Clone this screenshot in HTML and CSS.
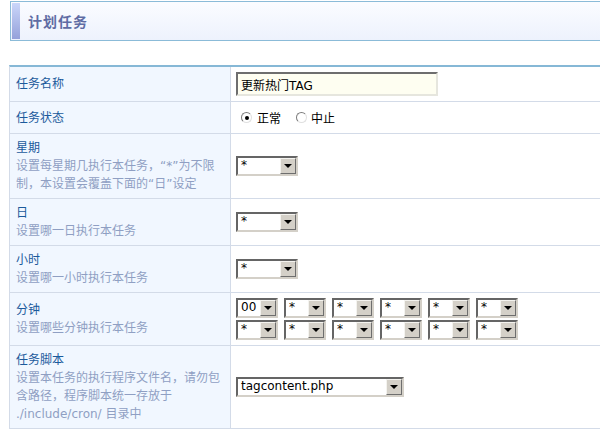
FILE: index.html
```html
<!DOCTYPE html>
<html lang="zh-CN">
<head>
<meta charset="utf-8">
<title>计划任务</title>
<link rel="stylesheet" href="styles.css">
</head>
<body>
<div class="page">
  <div class="title-box">
    <span class="accent"></span>
    <h1 class="title">计划任务</h1>
  </div>

  <table class="form">
    <tr class="row-name">
      <th><span class="label">任务名称</span></th>
      <td><input class="text-input" type="text" value="更新热门TAG"></td>
    </tr>
    <tr class="row-status">
      <th><span class="label">任务状态</span></th>
      <td>
        <span class="radio-group">
          <span class="radio checked"></span><span class="radio-text">正常</span>
          <span class="radio second"></span><span class="radio-text">中止</span>
        </span>
      </td>
    </tr>
    <tr>
      <th>
        <span class="label">星期</span>
        <span class="desc">设置每星期几执行本任务，“*”为不限制，本设置会覆盖下面的“日”设定</span>
      </th>
      <td><span class="select w62"><span class="val">*</span><span class="btn"></span></span></td>
    </tr>
    <tr>
      <th>
        <span class="label">日</span>
        <span class="desc">设置哪一日执行本任务</span>
      </th>
      <td><span class="select w62"><span class="val">*</span><span class="btn"></span></span></td>
    </tr>
    <tr>
      <th>
        <span class="label">小时</span>
        <span class="desc">设置哪一小时执行本任务</span>
      </th>
      <td><span class="select w62"><span class="val">*</span><span class="btn"></span></span></td>
    </tr>
    <tr>
      <th>
        <span class="label">分钟</span>
        <span class="desc">设置哪些分钟执行本任务</span>
      </th>
      <td>
        <div class="minutes">
          <span class="select"><span class="val">00</span><span class="btn"></span></span>
          <span class="select"><span class="val">*</span><span class="btn"></span></span>
          <span class="select"><span class="val">*</span><span class="btn"></span></span>
          <span class="select"><span class="val">*</span><span class="btn"></span></span>
          <span class="select"><span class="val">*</span><span class="btn"></span></span>
          <span class="select"><span class="val">*</span><span class="btn"></span></span>
          <span class="select"><span class="val">*</span><span class="btn"></span></span>
          <span class="select"><span class="val">*</span><span class="btn"></span></span>
          <span class="select"><span class="val">*</span><span class="btn"></span></span>
          <span class="select"><span class="val">*</span><span class="btn"></span></span>
          <span class="select"><span class="val">*</span><span class="btn"></span></span>
          <span class="select"><span class="val">*</span><span class="btn"></span></span>
        </div>
      </td>
    </tr>
    <tr>
      <th>
        <span class="label">任务脚本</span>
        <span class="desc">设置本任务的执行程序文件名，请勿包含路径，程序脚本统一存放于 <span class="nowrap">./include/cron/</span> 目录中</span>
      </th>
      <td><span class="select w168"><span class="val">tagcontent.php</span><span class="btn"></span></span></td>
    </tr>
  </table>
</div>
</body>
</html>
```

FILE: styles.css
```css
html, body {
  margin: 0;
  padding: 0;
  background: #ffffff;
}

body {
  font-family: "DejaVu Sans", "Noto Sans CJK SC", sans-serif;
  font-size: 12px;
  color: #000;
}

.page {
  padding: 1px 0 0 9px;
}

/* ---------- title box ---------- */
.title-box {
  margin-left: 1px;
  padding: 1px 0 1px 1px;
  box-sizing: content-box;
  height: 36px;
  border: 1px solid #8bbbd8;
  border-right: none;
  background: linear-gradient(#fbfcff, #edf2fd);
  display: flex;
  align-items: center;
}

.accent {
  width: 8px;
  height: 36px;
  background: linear-gradient(#cbd6fa, #95a1da);
  flex: none;
}

.title {
  margin: 0 0 0 8px;
  font-family: "Noto Sans CJK SC", sans-serif;
  font-size: 14px;
  font-weight: bold;
  letter-spacing: 1px;
  color: #5f6ca4;
  line-height: 18px;
}

/* ---------- form table ---------- */
.form {
  margin-top: 24px;
  width: 100%;
  border-collapse: separate;
  border-spacing: 0;
  border-top: 2px solid #86b8d6;
  border-left: 1px solid #d3dbe8;
}

.form th,
.form td {
  border-bottom: 1px solid #d3dbe8;
  vertical-align: middle;
  padding: 5px;
}

.form th {
  width: 208px;
  padding: 5px 6px;
  text-align: left;
  font-weight: normal;
  background: #f1f7ff;
  border-right: 1px solid #d3dbe8;
  line-height: 18px;
}

.label {
  display: block;
  color: #1b5a9c;
}

.desc {
  display: block;
  color: #8f9fc3;
}

.nowrap {
  white-space: nowrap;
}

/* ---------- text input ---------- */
.text-input {
  display: block;
  box-sizing: border-box;
  width: 202px;
  height: 24px;
  margin: 0;
  padding: 0 0 0 3px;
  border: 2px solid;
  border-color: #6e6e6e #e6e6de #e6e6de #6e6e6e;
  background: #fefef1;
  font-family: "DejaVu Sans", "Noto Sans CJK SC", sans-serif;
  font-size: 12px;
  color: #000;
  outline: none;
}

/* ---------- radios ---------- */
.radio-group {
  display: flex;
  align-items: center;
  height: 21px;
  font-family: "Noto Sans CJK SC", sans-serif;
}

.radio {
  position: relative;
  box-sizing: border-box;
  width: 11px;
  height: 11px;
  margin-left: 5px;
  margin-right: 5px;
  border-radius: 50%;
  border: 1px solid;
  border-color: #7c7c7c #e0e0e0 #e0e0e0 #7c7c7c;
  background: #fff;
  flex: none;
}

.radio.second {
  margin-left: 15px;
  margin-right: 4px;
}

.radio.checked::after {
  content: "";
  position: absolute;
  left: 2.5px;
  top: 2.5px;
  width: 4px;
  height: 4px;
  border-radius: 50%;
  background: #000;
}

.radio-text {
  line-height: 21px;
  color: #000;
}

/* ---------- fake selects ---------- */
.select {
  display: flex;
  box-sizing: border-box;
  width: 42px;
  height: 20px;
  border: 2px solid;
  border-color: #656565 #d4d0c8 #d4d0c8 #656565;
  background: #fff;
}

.select.w62 { width: 62px; }
.select.w168 { width: 168px; }

.select .val {
  flex: 1;
  min-width: 0;
  padding-left: 3px;
  font-size: 12px;
  line-height: 15px;
  color: #000;
  overflow: hidden;
  white-space: nowrap;
}

.select .btn {
  position: relative;
  flex: none;
  box-sizing: border-box;
  width: 16px;
  height: 16px;
  background: #d4d0c8;
  border: 1px solid;
  border-color: #f4f3ef #6e6e6e #6e6e6e #f4f3ef;
}

.select .btn::after {
  content: "";
  position: absolute;
  left: 3px;
  top: 5px;
  border-left: 4px solid transparent;
  border-right: 4px solid transparent;
  border-top: 4px solid #000;
}

.minutes {
  display: grid;
  grid-template-columns: repeat(6, 42px);
  column-gap: 6px;
  row-gap: 2px;
}
```
